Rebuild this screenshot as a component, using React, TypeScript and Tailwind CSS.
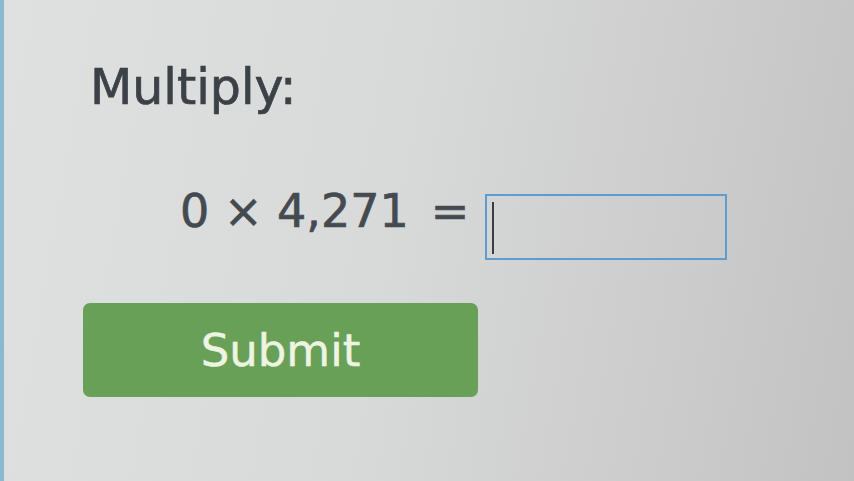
import { useState } from 'react';

export default function App() {
  const [answer, setAnswer] = useState('');

  return (
    <div
      className="min-h-[481px] w-full border-l-[4px] border-[#8db9cc] bg-[linear-gradient(100deg,#dfe1e1_0%,#d8d9d9_45%,#cbcbcb_80%,#c2c2c2_100%)] pl-[86px] pt-[63px] text-[#3c4147] [-webkit-text-stroke:0.7px_currentColor]"
      style={{ fontFamily: '"DejaVu Sans", Verdana, sans-serif' }}
    >
      {/* Question heading */}
      <h1 className="text-[49px] leading-none font-normal">Multiply:</h1>

      {/* Equation with answer box */}
      <div className="mt-[76px] ml-[90px] flex items-start">
        <span className="text-[46px] leading-none text-[#454a50]">0 × 4,271</span>
        <span className="ml-[22px] text-[46px] leading-none text-[#454a50]">=</span>
        <div className="relative ml-[16px] mt-[6px] h-[66px] w-[242px] border-2 border-[#5d9ccc]">
          <input
            value={answer}
            onChange={(e) => setAnswer(e.target.value)}
            className="h-full w-full bg-transparent px-2 text-[40px] outline-none"
          />
          {!answer && <span className="absolute left-[5px] top-[6px] h-[52px] w-[2px] bg-[#3a3f44]" />}
        </div>
      </div>

      {/* Submit button */}
      <button
        type="button"
        className="mt-[43px] -ml-[7px] flex h-[94px] w-[395px] items-center justify-center rounded-[7px] bg-[#68a057] text-[45px] leading-none text-[#eef4e2] [-webkit-text-stroke:0.5px_#eef4e2]"
      >
        Submit
      </button>
    </div>
  );
}
